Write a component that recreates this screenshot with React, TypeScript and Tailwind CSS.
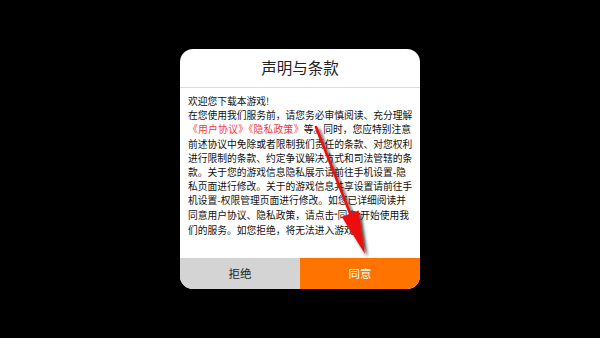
import React from 'react';

const q = (c: string) => (
  <span style={{ fontFamily: '"Liberation Sans", sans-serif' }}>{c}</span>
);

const lines: React.ReactNode[] = [
  '欢迎您下载本游戏!',
  '在您使用我们服务前，请您务必审慎阅读、充分理解',
  <>
    <span className="text-[#f23c3c] tracking-[0.3px]">《用户协议》《隐私政策》</span>等。同时，您应特别注意
  </>,
  '前述协议中免除或者限制我们责任的条款、对您权利',
  '进行限制的条款、约定争议解决方式和司法管辖的条',
  '款。关于您的游戏信息隐私展示请前往手机设置-隐',
  '私页面进行修改。关于的游戏信息共享设置请前往手',
  '机设置-权限管理页面进行修改。如您已详细阅读并',
  <>
    同意用户协议、隐私政策，请点击{q('“')}同意{q('”')}开始使用我
  </>,
  '们的服务。如您拒绝，将无法进入游戏。',
];

const App: React.FC = () => {
  return (
    <div
      className="relative w-[600px] h-[338px] bg-black flex items-center justify-center overflow-hidden"
      style={{ fontFamily: '"Noto Sans CJK SC", "Noto Sans", sans-serif' }}
    >
      {/* Dialog */}
      <div className="w-[240px] h-[240px] bg-white rounded-[13px] overflow-hidden flex flex-col">
        <div className="h-[38px] flex items-center justify-center text-[15.5px] text-[#222]">
          声明与条款
        </div>
        <div className="h-px bg-[#dcdcdc]" />
        <div className="flex-1 px-[8px] pt-[6px] text-[9.75px] leading-[14.2px] text-[#111]">
          {lines.map((l, i) => (
            <div key={i} className="whitespace-nowrap">{l}</div>
          ))}
        </div>
        <div className="h-[31px] flex text-[11.5px]">
          <button className="flex-1 bg-[#d4d4d4] text-[#222] flex items-center justify-center">拒绝</button>
          <button className="flex-1 bg-[#ff7300] text-white flex items-center justify-center">同意</button>
        </div>
      </div>

      {/* Red arrow annotation */}
      <svg className="absolute inset-0 pointer-events-none" width="600" height="338" viewBox="0 0 600 338">
        <defs>
          <filter id="sh" x="-50%" y="-50%" width="200%" height="200%">
            <feDropShadow dx="2.5" dy="2.5" stdDeviation="1.8" floodColor="#000" floodOpacity="0.75" />
          </filter>
        </defs>
        <g filter="url(#sh)">
          <line x1="316" y1="127" x2="352" y2="218" stroke="#ee1111" strokeWidth="2.6" strokeLinecap="round" />
          <polygon points="365,254 358.6,210.4 341.8,216.8" fill="#ee1111" />
        </g>
      </svg>
    </div>
  );
};

export default App;
